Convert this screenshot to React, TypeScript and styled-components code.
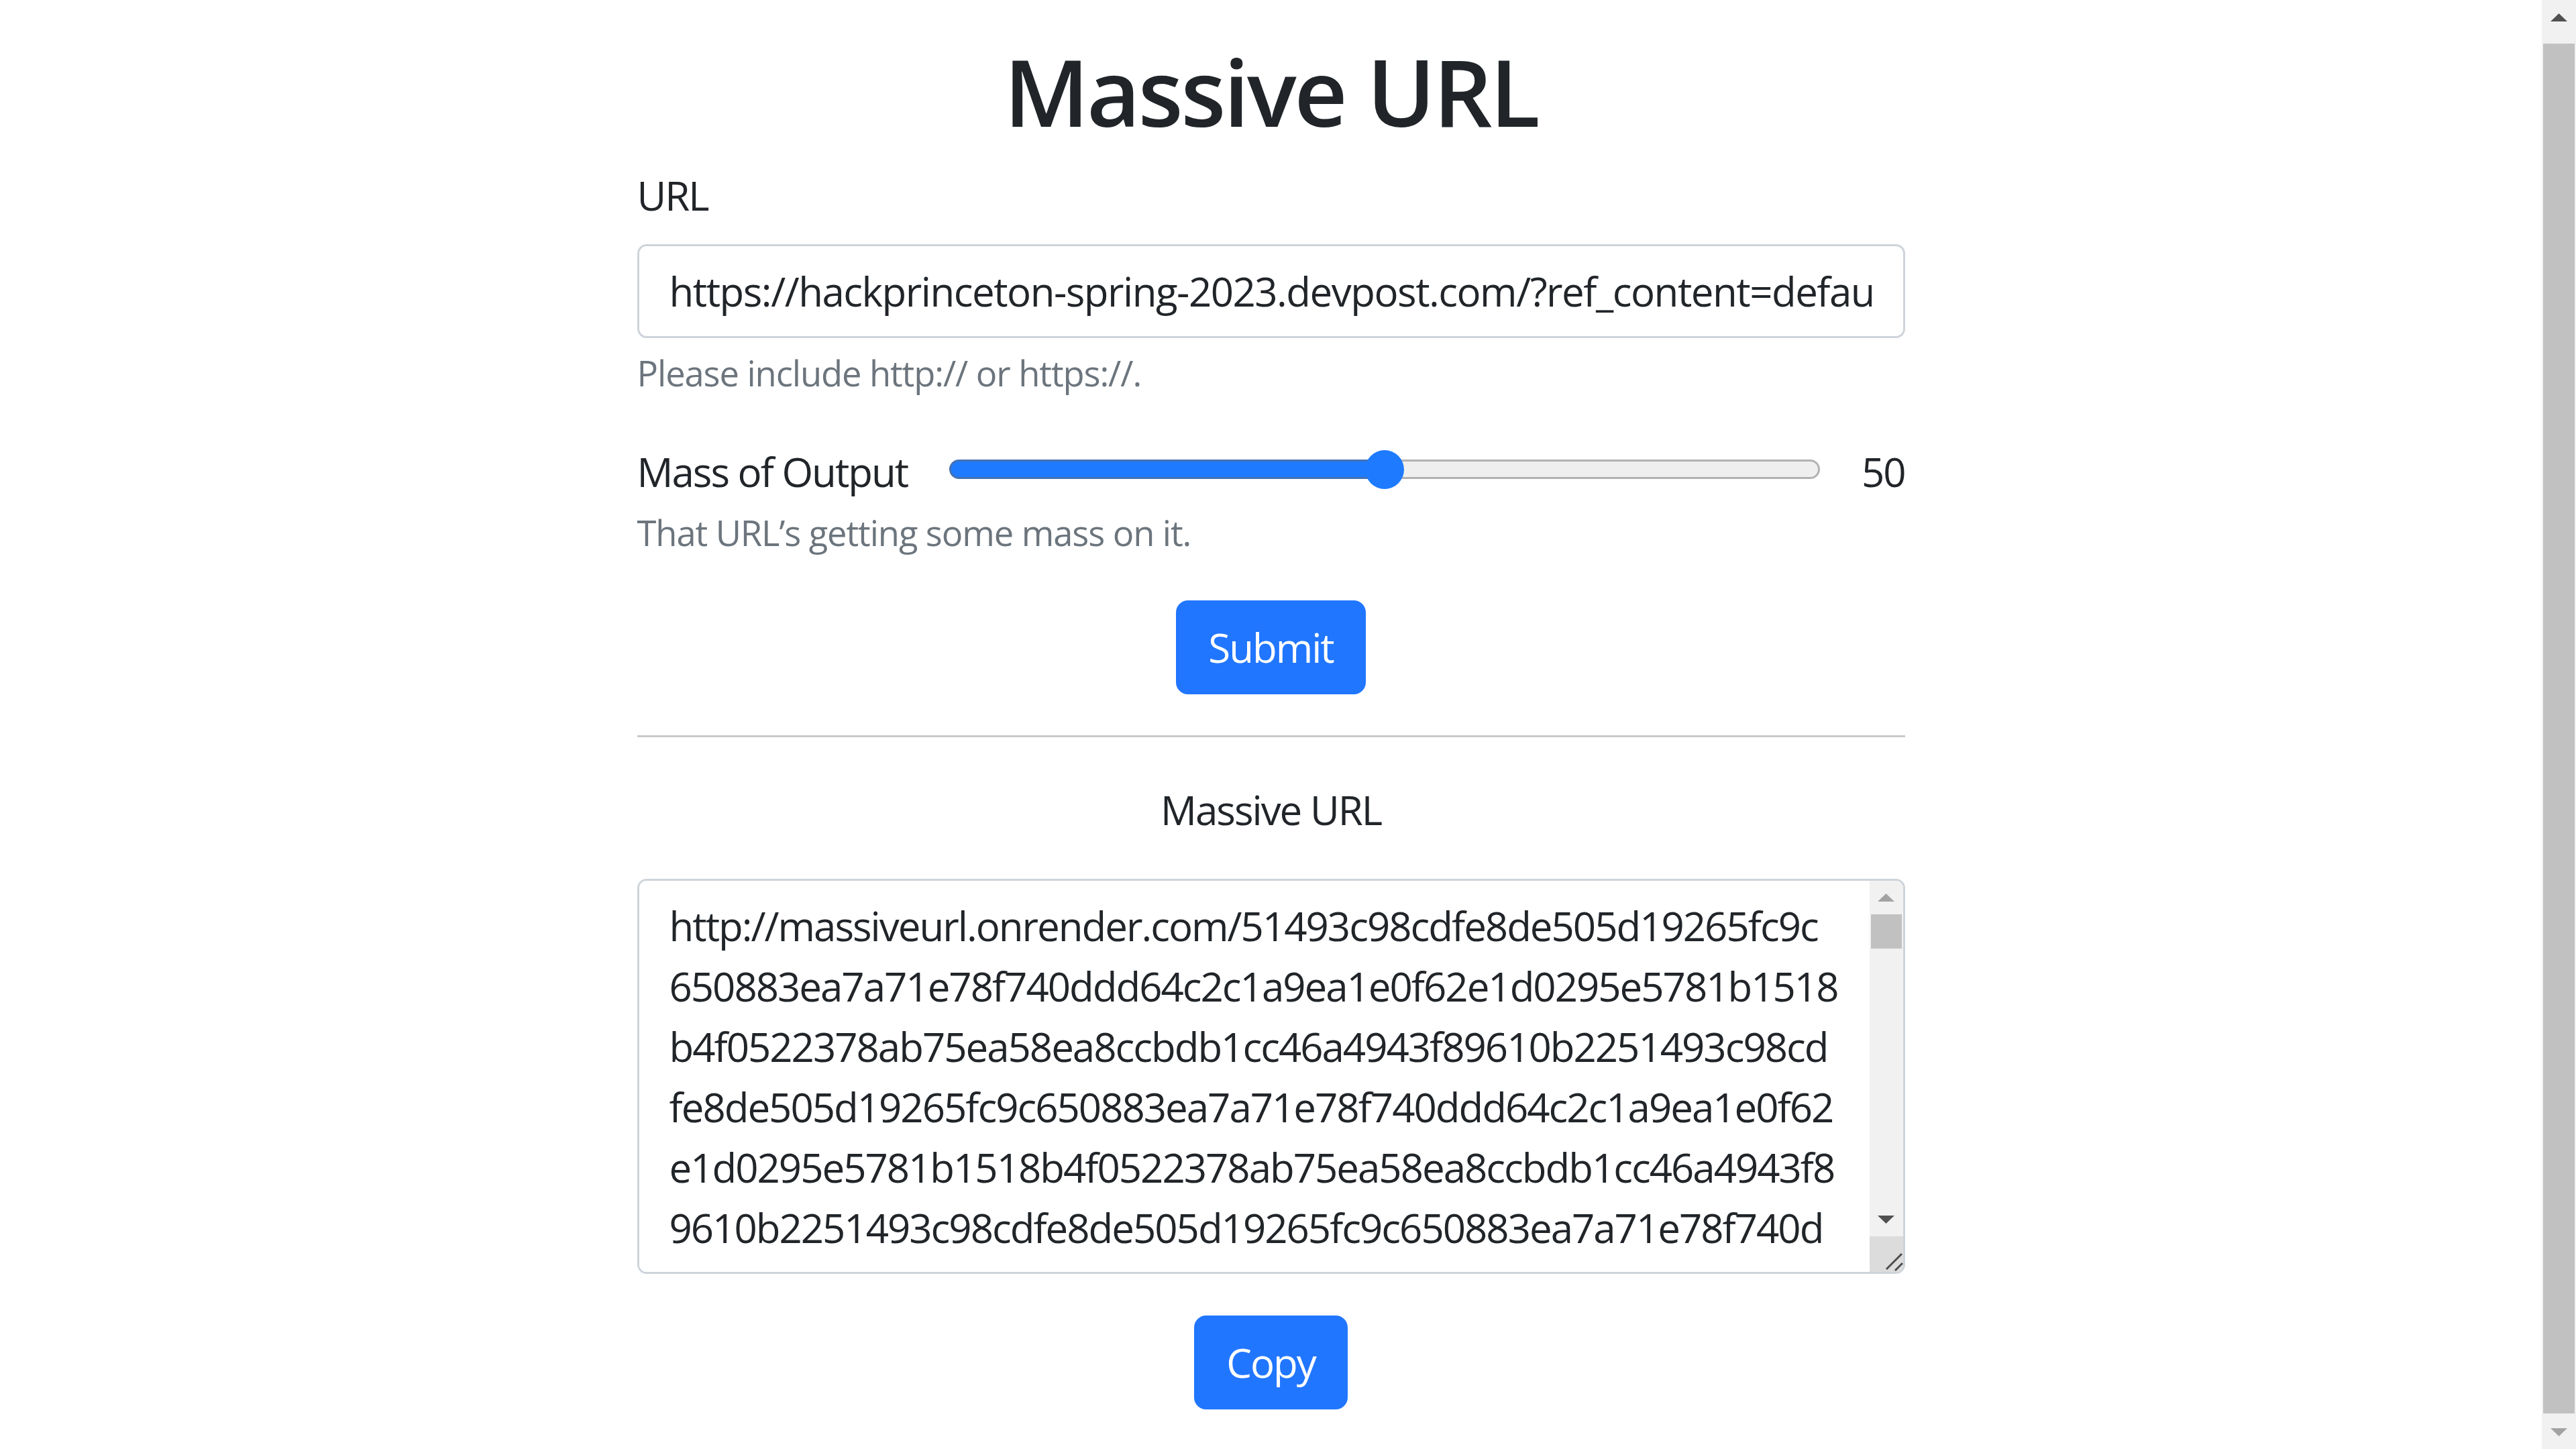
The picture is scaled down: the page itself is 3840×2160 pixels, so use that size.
import React from "react";
import styled, {createGlobalStyle} from "styled-components";

const GlobalStyle = createGlobalStyle`
  html, body {
    margin: 0;
    padding: 0;
    background: #fff;
  }

  body {
    font-family: "Open Sans", "Noto Sans", sans-serif;
    color: #212529;
    overflow: hidden;
  }

  * {
    box-sizing: border-box;
  }
`;

const Page = styled.div`
  display: flex;
  height: 100vh;
  overflow: hidden;
`;

const Main = styled.main`
  flex: 1;
  min-width: 0;
  overflow: hidden;
`;

const Container = styled.div`
  width: 1890px;
  margin: 0 auto;
  padding-top: 51px;
  display: flex;
  flex-direction: column;
`;

const Title = styled.h1`
  margin: 0 0 27px;
  text-align: center;
  font-size: 138px;
  line-height: 168px;
  font-weight: 600;
  letter-spacing: -3.5px;
`;

const FieldLabel = styled.label`
  display: block;
  font-size: 60px;
  line-height: 90px;
  letter-spacing: -2px;
  margin-bottom: 28px;
`;

const TextInput = styled.input`
  width: 100%;
  font-family: inherit;
  font-size: 60px;
  line-height: 90px;
  letter-spacing: -1.5px;
  color: #212529;
  background: #fff;
  padding: 22px 47px 22px 45px;
  border: 3px solid #ced4da;
  border-radius: 14px;
  outline: none;
`;

const HelpText = styled.div<{ $top: number }>`
  margin-top: ${p => p.$top}px;
  font-size: 52.5px;
  line-height: 79px;
  letter-spacing: -1.1px;
  color: #6c757d;
`;

const SliderRow = styled.div`
  display: flex;
  align-items: center;
  gap: 62px;
  height: 90px;
  margin-top: 63px;
`;

const RowText = styled.span`
  font-size: 60px;
  line-height: 90px;
  letter-spacing: -2px;
  white-space: nowrap;
`;

const Track = styled.div`
  position: relative;
  flex: 1;
  display: flex;
  height: 29px;
  margin-bottom: 7px;
`;

const TrackFill = styled.div`
  height: 100%;
  background: #1e7bff;
  border: 3px solid #4472b4;
  border-right: none;
  border-radius: 15px 0 0 15px;
`;

const TrackRest = styled.div`
  flex: 1;
  height: 100%;
  background: #efefef;
  border: 3px solid #b2b2b2;
  border-left: none;
  border-radius: 0 15px 15px 0;
`;

const Thumb = styled.div`
  position: absolute;
  top: 50%;
  width: 58px;
  height: 58px;
  border-radius: 50%;
  background: #1e7bff;
  transform: translate(-50%, -50%);
`;

const Button = styled.button<{ $top: number }>`
  align-self: center;
  margin-top: ${p => p.$top}px;
  font-family: inherit;
  font-size: 60px;
  line-height: 90px;
  letter-spacing: -2px;
  color: #fff;
  background: #2176ff;
  border: 3px solid #2176ff;
  border-radius: 18px;
  padding: 22px 45px;
  cursor: pointer;
`;

const Divider = styled.hr`
  width: 100%;
  margin: 61px 0 0;
  border: 0;
  border-top: 3px solid #c9cacb;
`;

const SubHeading = styled.h2`
  margin: 63px 0 0;
  text-align: center;
  font-size: 60px;
  line-height: 90px;
  font-weight: 400;
  letter-spacing: -2px;
`;

const OutputBox = styled.div`
  display: flex;
  height: 589px;
  margin-top: 58px;
  border: 3px solid #ced4da;
  border-radius: 14px;
  overflow: hidden;
`;

const OutputText = styled.textarea`
  flex: 1;
  min-width: 0;
  border: none;
  outline: none;
  resize: none;
  overflow: hidden;
  white-space: pre;
  padding: 22px 46px 22px 45px;
  font-family: inherit;
  font-size: 60px;
  line-height: 90px;
  letter-spacing: -2px;
  color: #212529;
  background: #fff;
`;

const ScrollColumn = styled.div<{ $width: number }>`
  width: ${p => p.$width}px;
  flex-shrink: 0;
  display: flex;
  flex-direction: column;
  background: #f1f1f1;
`;

const ScrollButton = styled.div<{ $size: number }>`
  height: ${p => p.$size}px;
  flex-shrink: 0;
  display: flex;
  align-items: center;
  justify-content: center;
`;

const ScrollThumb = styled.div<{ $height?: number; $top?: number; $bottom?: number }>`
  margin: ${p => p.$top ?? 0}px 2px ${p => p.$bottom ?? 0}px;
  background: #c1c1c1;
  ${p => p.$height ? `height: ${p.$height}px;` : "flex: 1;"}
`;

const Spacer = styled.div`
  flex: 1;
`;

const Resizer = styled.div`
  height: 53px;
  background: #dcdcdc;
`;

const Arrow = ({dir, color}: { dir: "up" | "down", color: string }) => (
    <svg width="25" height="12" viewBox="0 0 25 12">
        <polygon points={dir === "up" ? "0,12 12.5,0 25,12" : "0,0 25,0 12.5,12"} fill={color}/>
    </svg>
);

const hashLines = [
    "http://massiveurl.onrender.com/51493c98cdfe8de505d19265fc9c",
    "650883ea7a71e78f740ddd64c2c1a9ea1e0f62e1d0295e5781b1518",
    "b4f0522378ab75ea58ea8ccbdb1cc46a4943f89610b2251493c98cd",
    "fe8de505d19265fc9c650883ea7a71e78f740ddd64c2c1a9ea1e0f62",
    "e1d0295e5781b1518b4f0522378ab75ea58ea8ccbdb1cc46a4943f8",
    "9610b2251493c98cdfe8de505d19265fc9c650883ea7a71e78f740d",
    "dd64c2c1a9ea1e0f62e1d0295e5781b1518b4f0522378ab75ea58ea",
    "8ccbdb1cc46a4943f89610b2251493c98cdfe8de505d19265fc9c65",
];

const App: React.FC = () => {
    const mass = 50;

    return (
        <>
            <GlobalStyle/>
            <Page>
                <Main>
                    <Container>
                        <Title>Massive URL</Title>
                        <FieldLabel htmlFor="url">URL</FieldLabel>
                        <TextInput id="url" readOnly
                                   value="https://hackprinceton-spring-2023.devpost.com/?ref_content=default&ref_feature=challenge&ref_medium=discover"/>
                        <HelpText $top={12}>Please include http:// or https://.</HelpText>

                        <SliderRow>
                            <RowText>Mass of Output</RowText>
                            <Track>
                                <TrackFill style={{width: `${mass}%`}}/>
                                <TrackRest/>
                                <Thumb style={{left: `${mass}%`}}/>
                            </Track>
                            <RowText>{mass}</RowText>
                        </SliderRow>
                        <HelpText $top={6}>That URL’s getting some mass on it.</HelpText>

                        <Button $top={62}>Submit</Button>
                        <Divider/>

                        <SubHeading>Massive URL</SubHeading>
                        <OutputBox>
                            <OutputText readOnly wrap="off" value={hashLines.join("\n")}/>
                            <ScrollColumn $width={50}>
                                <ScrollButton $size={50}><Arrow dir="up" color="#a3a3a3"/></ScrollButton>
                                <ScrollThumb $height={51}/>
                                <Spacer/>
                                <ScrollButton $size={50}><Arrow dir="down" color="#505050"/></ScrollButton>
                                <Resizer>
                                    <svg width="50" height="53" viewBox="0 0 50 53">
                                        <line x1="48" y1="26" x2="25" y2="49" stroke="#4d4d4d" strokeWidth="3"/>
                                        <line x1="49" y1="40" x2="38" y2="51" stroke="#4d4d4d" strokeWidth="3"/>
                                    </svg>
                                </Resizer>
                            </ScrollColumn>
                        </OutputBox>

                        <Button $top={62}>Copy</Button>
                    </Container>
                </Main>

                <ScrollColumn $width={51}>
                    <ScrollButton $size={51}><Arrow dir="up" color="#505050"/></ScrollButton>
                    <ScrollThumb $top={14} $bottom={2}/>
                    <ScrollButton $size={51}><Arrow dir="down" color="#a3a3a3"/></ScrollButton>
                </ScrollColumn>
            </Page>
        </>
    );
};

export default App;
